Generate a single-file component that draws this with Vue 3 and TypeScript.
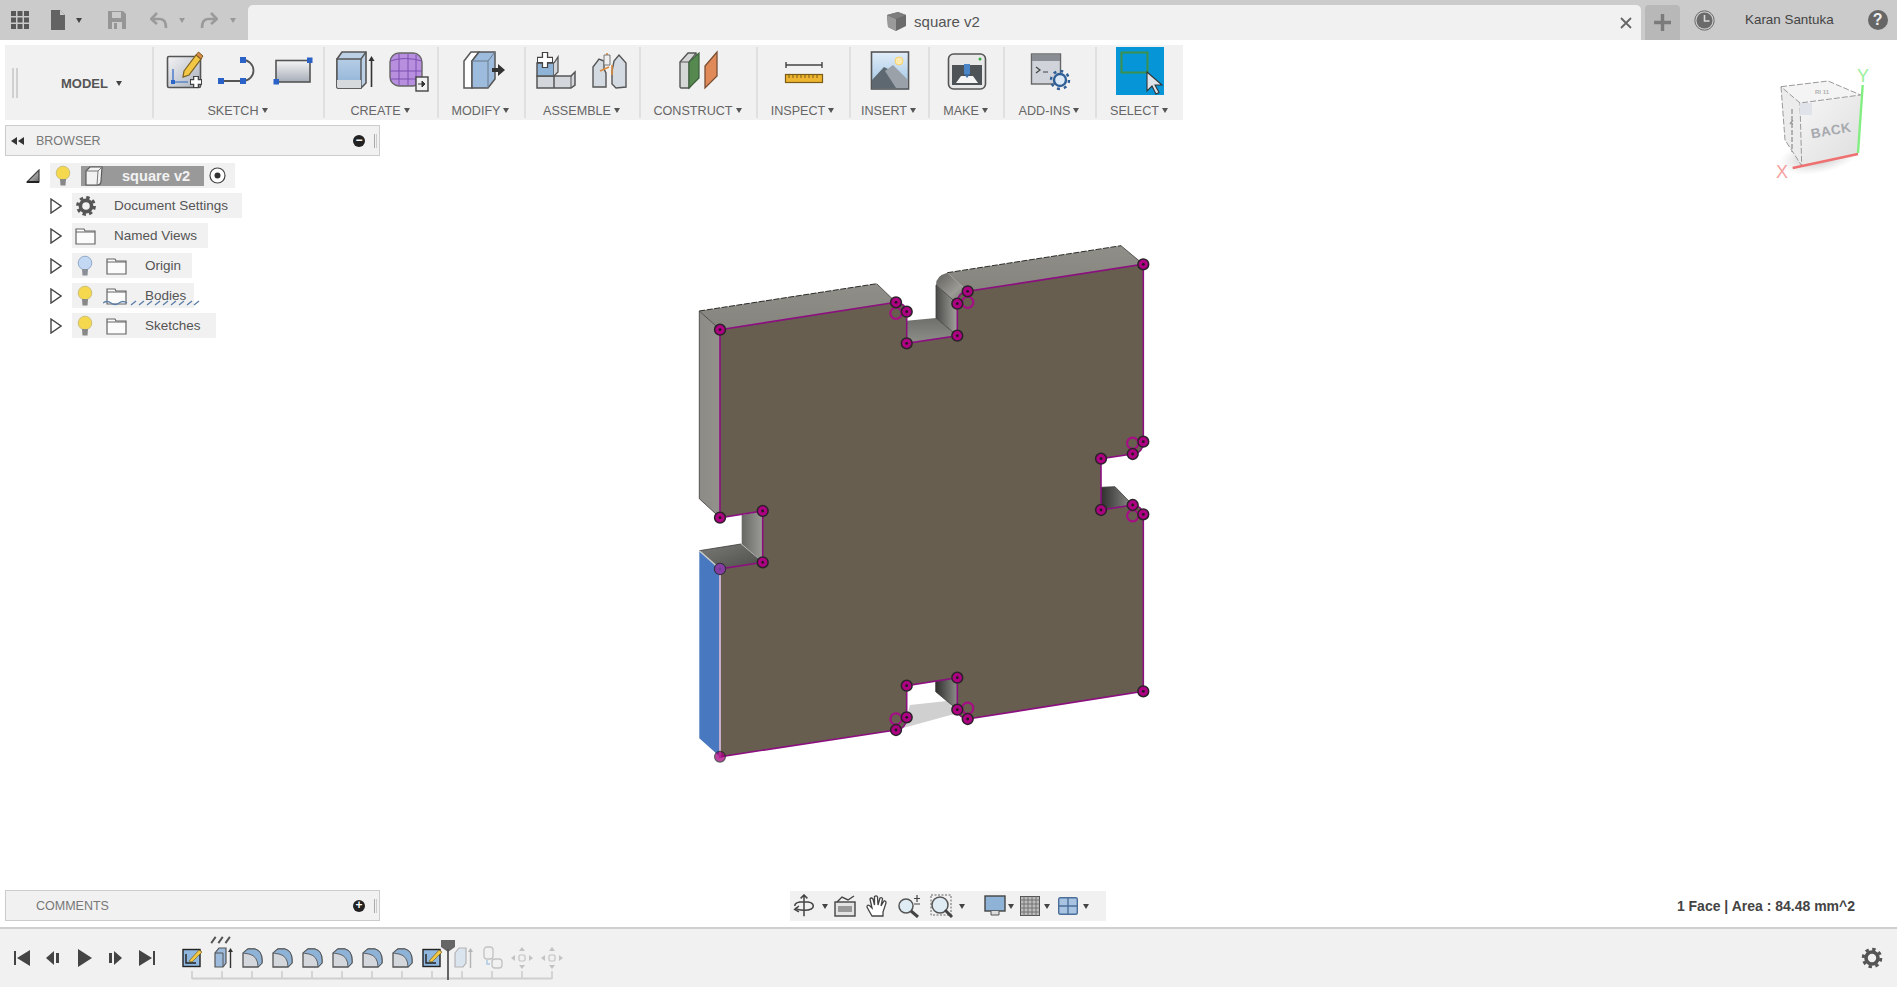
<script setup lang="ts">
const fillets: number[] = [1, 2, 3, 4, 5, 6];
const ticks: number[] = Array.from({ length: 13 }, (_, i) => 15 + i * 30);
const pts: [number, number][] = [
  [720, 329.7], [896, 302.3], [906.7, 311.7], [906.7, 343.3], [957.3, 335.7], [957.3, 303.7],
  [967.7, 291.3], [1143.3, 264.3], [1143.3, 441.7], [1132.7, 454], [1101, 458.7], [1101, 510],
  [1132.7, 505], [1143.3, 514.3], [1143.3, 691.3], [967.7, 719], [957.3, 709.7], [957.3, 677.7],
  [906.7, 685.7], [906.7, 717.3], [896, 730], [720, 569], [762.7, 562.3], [762.7, 511], [720, 517.7]
];
const rings: [number, number][] = [
  [896, 313.3], [967.7, 302.3], [1132.7, 443.3], [1132.7, 515.7], [896, 719], [967.7, 708.3]
];
</script>

<template>
  <div class="app">
    <svg class="scene" width="1897" height="987" viewBox="0 0 1897 987">
      <defs>
        <linearGradient id="gTop" x1="0" y1="0" x2="0" y2="1"><stop offset="0" stop-color="#8f8e88" /><stop offset="1" stop-color="#85847d" /></linearGradient>
        <linearGradient id="gLeft" x1="0" y1="0" x2="1" y2="0"><stop offset="0" stop-color="#8c8b85" /><stop offset="1" stop-color="#92918b" /></linearGradient>
        <linearGradient id="gWall" x1="0" y1="0" x2="1" y2="0"><stop offset="0" stop-color="#4a4a48" /><stop offset="1" stop-color="#a3a39e" /></linearGradient>
        <linearGradient id="gWall2" x1="0" y1="0" x2="1" y2="0"><stop offset="0" stop-color="#666663" /><stop offset="1" stop-color="#9c9c97" /></linearGradient>
        <linearGradient id="gFloor" x1="0" y1="0" x2="0" y2="1"><stop offset="0" stop-color="#6e6e6b" /><stop offset="1" stop-color="#8f8f8a" /></linearGradient>
        <linearGradient id="gFloor2" x1="0" y1="0" x2="1" y2="1"><stop offset="0" stop-color="#7a7a76" /><stop offset="1" stop-color="#4c4c4a" /></linearGradient>
        <linearGradient id="gDark" x1="0" y1="0" x2="1" y2="0"><stop offset="0" stop-color="#2f2f2e" /><stop offset="1" stop-color="#8c8c88" /></linearGradient>
        <linearGradient id="gRound" x1="0" y1="0" x2="1" y2="1"><stop offset="0" stop-color="#5f5f5c" /><stop offset=".6" stop-color="#9b9a94" /><stop offset="1" stop-color="#6d6d69" /></linearGradient>
        <linearGradient id="gCube" x1="0" y1="0" x2="1" y2="1"><stop offset="0" stop-color="#f6f6f6" /><stop offset="1" stop-color="#dedede" /></linearGradient>
        <radialGradient id="gShadow"><stop offset="0" stop-color="#9a9a9a" stop-opacity=".75" /><stop offset="1" stop-color="#bbb" stop-opacity="0" /></radialGradient>
      </defs>

      <polygon points="910,705 946.7,701 958,713 903,728" fill="#d0d0d0" />
      <polygon points="699.3,311 876.7,283.7 896,302.3 720,329.7" fill="url(#gTop)" />
      <polygon points="699.3,311 720,329.7 720,517.7 699.3,498.7" fill="url(#gLeft)" />
      <polygon points="906.7,343.3 957.3,335.7 936,318 906.7,320.7" fill="url(#gFloor)" />
      <polygon points="936,285 957.3,303.7 957.3,335.7 936,318" fill="url(#gWall)" />
      <path d="M936 285 Q935.5 276 947.3 272.7 L967.7 291.3 L957.3 303.7 Z" fill="url(#gRound)" />
      <polygon points="947.3,272.7 1121,245.7 1143.3,264.3 967.7,291.3" fill="url(#gTop)" />
      <polygon points="741.7,515 762.7,511 762.7,562.3 741.7,544" fill="url(#gWall2)" />
      <polygon points="699.3,550.7 741,544 762.7,562.3 720,569" fill="url(#gFloor2)" />
      <polygon points="1101,487.3 1115,486.7 1132.7,505 1101,510" fill="url(#gDark)" />
      <polygon points="935.7,681 957.3,677.7 957.3,709.7 935.7,691.7" fill="url(#gDark)" />
      <polygon points="699.3,550.7 720,569 720,756.7 699.3,738.3" fill="#4878c0" />

      <path d="M699.3 311 L876.7 283.7 M947.3 272.7 L1121 245.7" fill="none" stroke="#2c2c2a" stroke-width="1" stroke-dasharray="6 1.5" />
      <path d="M876.7 283.7 L896 302.3 M1121 245.7 L1143.3 264.3 M699.3 311 L720 329.7 M699.3 311 L699.3 498.7 L720 517.7 M699.3 550.7 L741 544 M1101 487.3 L1115 486.7 L1132.7 505 M935.7 681 L935.7 691.7 L957.3 709.7 M936 285 L936 318 L957.3 335.7 M936 285 L957.3 303.7" fill="none" stroke="#3a3a38" stroke-width=".8" />
      <path d="M699.3 550.7 L720 569" stroke="#ccc" stroke-width="1.5" />

      <path
        d="M720 329.7 L896 302.3 A10.7 10.7 0 0 1 906.7 313 L906.7 343.3 L957.3 335.7 L957.3 303.7 A10.7 11 0 0 1 967.7 291.3 L1143.3 264.3 L1143.3 441.7 A10.7 11 0 0 1 1132.7 454 L1101 458.7 L1101 510 L1132.7 505 A10.7 10.7 0 0 1 1143.3 514.3 L1143.3 691.3 L967.7 719 A10.7 10.7 0 0 1 957.3 709.7 L957.3 677.7 L906.7 685.7 L906.7 717.3 A10.7 12 0 0 1 896 730 L720 756.7 L720 569 L762.7 562.3 L762.7 511 L720 517.7 Z"
        fill="#675e4f"
        stroke="#8c0f80"
        stroke-width="1.6"
      />
      <path d="M720 569 L720 756.7" stroke="#c9aecb" stroke-width="2" />

      <circle v-for="(r, i) in rings" :key="'r' + i" :cx="r[0]" :cy="r[1]" r="5.6" fill="none" stroke="#a60e85" stroke-width="2.2" />
      <g v-for="(p, i) in pts" :key="'p' + i">
        <circle :cx="p[0]" :cy="p[1]" r="5.4" fill="#ad0082" stroke="#2b2228" stroke-width="1.5" />
        <circle :cx="p[0]" :cy="p[1]" r="1.4" fill="#22181f" />
      </g>
      <g opacity=".75">
        <circle cx="720" cy="569" r="5.4" fill="#7d4fb0" />
        <circle cx="720" cy="756.7" r="5.4" fill="#a8007f" stroke="#2b2228" stroke-width="1.2" />
      </g>

      <ellipse cx="1820" cy="156" rx="42" ry="17" fill="url(#gShadow)" transform="rotate(-12 1820 156)" />
      <polygon points="1781,86.7 1828,81 1860.7,95 1800,103" fill="#f4f4f4" />
      <polygon points="1781,86.7 1800,103 1801.7,165.7 1785,140" fill="#ececec" />
      <polygon points="1800,103 1860.7,95 1858,154 1801.7,165.7" fill="url(#gCube)" />
      <path d="M1781 86.7 L1828 81 L1860.7 95 L1800 103 Z M1781 86.7 L1785 140 L1801.7 165.7 L1800 103" fill="none" stroke="#9a9a9a" stroke-width="1" stroke-dasharray="6 2" />
      <rect x="1800" y="103" width="12" height="12" fill="#e0e4ea" />
      <text class="cube-back" x="1831" y="135" text-anchor="middle" transform="rotate(-10 1831 130)">BACK</text>
      <text class="cube-top" x="1822" y="94" text-anchor="middle">RI 11</text>
      <path d="M1792 109 V152 M1793 120 l-3 4 h3" stroke="#999" fill="none" stroke-width="1.4" stroke-dasharray="5 2" />
      <line x1="1792.7" y1="168" x2="1858" y2="154" stroke="#ee7070" stroke-width="2.4" />
      <line x1="1858" y1="153" x2="1862.7" y2="85" stroke="#82ee82" stroke-width="2.4" />
      <text class="axis-y" x="1863" y="82" text-anchor="middle">Y</text>
      <text class="axis-x" x="1782" y="178" text-anchor="middle">X</text>
    </svg>

    <header class="topbar">
      <svg class="t-grid" width="18" height="18" viewBox="0 0 18 18">
        <g fill="#595959">
          <rect x="0" y="0" width="5" height="5" /><rect x="6.5" y="0" width="5" height="5" /><rect x="13" y="0" width="5" height="5" />
          <rect x="0" y="6.5" width="5" height="5" /><rect x="6.5" y="6.5" width="5" height="5" /><rect x="13" y="6.5" width="5" height="5" />
          <rect x="0" y="13" width="5" height="5" /><rect x="6.5" y="13" width="5" height="5" /><rect x="13" y="13" width="5" height="5" />
        </g>
      </svg>
      <svg class="t-file" width="14" height="20" viewBox="0 0 14 20"><path d="M0 0 H9 L14 5 V20 H0 Z" fill="#636363" /><path d="M9 0 V5 H14" fill="#cbcbcb" /></svg>
      <span class="caret dark t-c1"></span>
      <svg class="t-save" width="18" height="18" viewBox="0 0 18 18"><path d="M0 0 H15 L18 3 V18 H0 Z" fill="#969696" /><rect x="4" y="1" width="9" height="6" fill="#cbcbcb" /><rect x="4" y="11" width="10" height="7" fill="#cbcbcb" /><rect x="6" y="12" width="3" height="6" fill="#969696" /></svg>
      <svg class="t-undo" width="18" height="18" viewBox="0 0 18 18"><path d="M7 2 L1 8 L7 13 M2 8 H10 Q16 8 16 17" fill="none" stroke="#9a9a9a" stroke-width="2.6" /></svg>
      <span class="caret faint t-c2"></span>
      <svg class="t-redo" width="18" height="18" viewBox="0 0 18 18"><path d="M11 2 L17 8 L11 13 M16 8 H8 Q2 8 2 17" fill="none" stroke="#9a9a9a" stroke-width="2.6" /></svg>
      <span class="caret faint t-c3"></span>

      <div class="doc-tab">
        <div class="doc-title">
          <svg width="21" height="21" viewBox="0 0 21 21"><path d="M1 4 L12 1 L20 4 V15 L10 20 L2 16 Z" fill="#6b6b6b" /><path d="M1 4 L10 8 V20 L2 16 Z" fill="#9a9a9a" /><path d="M1 4 L12 1 L20 4 L10 8 Z" fill="#7d7d7d" /></svg>
          <span>square v2</span>
        </div>
        <svg class="doc-close" width="12" height="12" viewBox="0 0 12 12"><path d="M1 1 L11 11 M11 1 L1 11" stroke="#666" stroke-width="1.8" /></svg>
      </div>
      <div class="new-tab"><svg width="17" height="17" viewBox="0 0 17 17"><path d="M8.5 0 V17 M0 8.5 H17" stroke="#7b7b7b" stroke-width="3.4" /></svg></div>
      <svg class="t-clock" width="21" height="21" viewBox="0 0 21 21"><circle cx="10.5" cy="10.5" r="8" fill="#6a6a6a" /><circle cx="10.5" cy="10.5" r="9.7" fill="none" stroke="#6a6a6a" stroke-width="1" /><path d="M10.5 5 V11 H15.5" fill="none" stroke="#d8d8d8" stroke-width="1.6" /></svg>
      <span class="user">Karan Santuka</span>
      <div class="help">?</div>
    </header>

    <main class="main">
      <div class="toolbar">
        <div class="tb-model">
          <span class="grip"></span>
          <span class="model-label">MODEL</span>
          <span class="caret dark"></span>
        </div>

        <div class="group g-sketch">
          <div class="icons">
            <svg class="ic" viewBox="0 0 54 48">
              <defs><linearGradient id="iBox" x1="0" y1="0" x2="1" y2="1"><stop offset="0" stop-color="#f3f3f4" /><stop offset="1" stop-color="#a9b0bc" /></linearGradient></defs>
              <rect x="9.5" y="9.5" width="33" height="31" rx="1.5" fill="url(#iBox)" stroke="#555" stroke-width="1.6" />
              <path d="M15 22 V35 H30" fill="none" stroke="#2c66c6" stroke-width="1.2" /><rect x="13" y="33" width="4" height="4" fill="#2c66c6" />
              <path d="M26 24 L38 8 L43 12 L31 28 L25 30 Z" fill="#f2c744" stroke="#7a5f1e" stroke-width="1.2" /><path d="M38 8 L43 12 L45 9 L40.5 5 Z" fill="#d98a4d" stroke="#7a5f1e" />
              <path d="M38 29 V41 M32 35 H44" stroke="#444" stroke-width="6" /><path d="M38 30 V40 M33 35 H43" stroke="#fff" stroke-width="3.4" />
            </svg>
            <svg class="ic" viewBox="0 0 54 48">
              <path d="M9 34 H31 M31 13 A10.5 10.5 0 0 1 31 34" fill="none" stroke="#555" stroke-width="1.8" />
              <g fill="#2a62c8"><rect x="6" y="31" width="6" height="6" /><rect x="28" y="31" width="6" height="6" /><rect x="28" y="10" width="6" height="6" /></g>
            </svg>
            <svg class="ic" viewBox="0 0 54 48">
              <defs><linearGradient id="iRect" x1="0" y1="0" x2="0" y2="1"><stop offset="0" stop-color="#f5f5f5" /><stop offset="1" stop-color="#a6adb8" /></linearGradient></defs>
              <rect x="10" y="13.5" width="34" height="21.5" fill="url(#iRect)" stroke="#555" stroke-width="1.6" />
              <g fill="#2a62c8"><rect x="41" y="10.5" width="5.5" height="5.5" /><rect x="7.5" y="32" width="5.5" height="5.5" /></g>
            </svg>
          </div>
          <span class="lbl">SKETCH<i class="caret"></i></span>
        </div>

        <div class="group g-create">
          <div class="icons">
            <svg class="ic" viewBox="0 0 54 48">
              <defs><linearGradient id="iBlue" x1="0" y1="0" x2="0" y2="1"><stop offset="0" stop-color="#b5cde6" /><stop offset="1" stop-color="#8fb2d7" /></linearGradient></defs>
              <path d="M10 12 L15 5 H39 V36 L34 41 H11 Q10 41 10 40 Z" fill="#bcd0e6" stroke="#555" stroke-width="1.6" />
              <path d="M10 12 H34 V41 H11 Q10 41 10 40 Z" fill="url(#iBlue)" stroke="#555" stroke-width="1.4" />
              <path d="M10 33 H34 V41 H11 L10 40 Z" fill="#d7dadd" />
              <path d="M34 12 L39 5" stroke="#555" stroke-width="1.3" />
              <path d="M44.5 40 V12" stroke="#333" stroke-width="1.6" /><path d="M41.5 14 L44.5 9 L47.5 14 Z" fill="#333" />
            </svg>
            <svg class="ic" viewBox="0 0 54 48">
              <rect x="9" y="6" width="32" height="33" rx="9" fill="#b78fde" stroke="#666" stroke-width="1.4" />
              <path d="M9 14 Q24 9 41 14 M9 24 H41 M9 32 H41 M18 7 V38 M27 7 V38 M35 8 V38" fill="none" stroke="#7d4fb0" stroke-width="1" />
              <rect x="35" y="30" width="12" height="14" fill="#f1f1f1" stroke="#444" stroke-width="1.4" /><path d="M37 37 H42 M41 34 L44 37 L41 40 Z" stroke="#333" fill="#333" />
            </svg>
          </div>
          <span class="lbl">CREATE<i class="caret"></i></span>
        </div>

        <div class="group g-modify">
          <div class="icons">
            <svg class="ic" viewBox="0 0 54 48">
              <path d="M9 41 V14 L16 5 H24 L17 14 V41 Z" fill="#fff" stroke="#555" stroke-width="1.5" />
              <path d="M17 41 V14 L24 5 H40 V32 L33 41 Z" fill="#9dbbdc" stroke="#555" stroke-width="1.5" />
              <path d="M17 14 H33 V41 M33 14 L40 5" fill="none" stroke="#6a7a8c" stroke-width="1" />
              <path d="M37 21 H43 V17 L50 23 L43 29 V25 H37 Z" fill="#333" />
            </svg>
          </div>
          <span class="lbl">MODIFY<i class="caret"></i></span>
        </div>

        <div class="group g-assemble">
          <div class="icons">
            <svg class="ic" viewBox="0 0 54 48">
              <path d="M8 29 H25 V41 H8 Z M25 29 H42 L46 25 V38 L42 41 H25 Z" fill="#d3d6da" stroke="#555" stroke-width="1.5" />
              <path d="M42 29 V41" stroke="#555" />
              <path d="M8 29 V16 H25 V29 Z" fill="#8fb2d7" stroke="#555" stroke-width="1.5" />
              <path d="M25 16 L29 10 V25 L25 29" fill="#d3d6da" stroke="#555" stroke-width="1.3" />
              <path d="M16 5 V21 M8 13 H24" stroke="#444" stroke-width="6.4" /><path d="M16 6 V20 M9 13 H23" stroke="#fff" stroke-width="3.8" />
            </svg>
            <svg class="ic" viewBox="0 0 54 48">
              <path d="M10 40 V20 L16 12 L21 14 V22 L23 26 V40 Z" fill="#d4dae2" stroke="#555" stroke-width="1.4" />
              <path d="M29 24 L31 14 L36 8 L43 16 V40 L33 41 L29 37 Z" fill="#d4dae2" stroke="#555" stroke-width="1.4" />
              <path d="M17 24 L26 20" stroke="#d98a3a" stroke-width="1.6" /><path d="M24 6 V16 M29 18 V28" stroke="#d98a3a" stroke-width="1.6" />
              <path d="M21 8 h6 v10 h-6 Z" fill="#eee" stroke="#777" />
            </svg>
          </div>
          <span class="lbl">ASSEMBLE<i class="caret"></i></span>
        </div>

        <div class="group g-construct">
          <div class="icons">
            <svg class="ic" viewBox="0 0 54 48">
              <path d="M8 40 V15 L16 6 H24 V31 L17 41 H9 Z" fill="#d5d6d6" stroke="#555" stroke-width="1.4" />
              <path d="M17 41 V15 L8 15 M17 15 L24 6" fill="none" stroke="#555" stroke-width="1.2" />
              <path d="M17 41 V15 L27 6 V31 Z" fill="#55894f" stroke="#3d5f3b" stroke-width="1.2" />
              <path d="M33 41 V19 L45 5 V29 Z" fill="#e08a5a" stroke="#7a4e33" stroke-width="1.3" />
            </svg>
          </div>
          <span class="lbl">CONSTRUCT<i class="caret"></i></span>
        </div>

        <div class="group g-inspect">
          <div class="icons">
            <svg class="ic" viewBox="0 0 54 48">
              <path d="M9 18 H45 M9 15 V21 M45 15 V21" fill="none" stroke="#444" stroke-width="1.4" />
              <rect x="8.5" y="27.5" width="37" height="8" fill="#eeb530" stroke="#7a5c16" stroke-width="1.2" />
              <path d="M12 28 v3 M16 28 v3 M20 28 v3 M24 28 v3 M28 28 v3 M32 28 v3 M36 28 v3 M40 28 v3" stroke="#7a5c16" />
            </svg>
          </div>
          <span class="lbl">INSPECT<i class="caret"></i></span>
        </div>

        <div class="group g-insert">
          <div class="icons">
            <svg class="ic" viewBox="0 0 54 48">
              <defs><linearGradient id="iSky" x1="0" y1="0" x2="0" y2="1"><stop offset="0" stop-color="#e1edf8" /><stop offset="1" stop-color="#9cc2e4" /></linearGradient></defs>
              <rect x="8.5" y="5" width="37" height="37" fill="url(#iSky)" stroke="#555" stroke-width="1.6" />
              <circle cx="36" cy="14" r="4" fill="#fdeab0" stroke="#f5d26b" />
              <path d="M9 33 L21 20 L27 23 L45 38 V41 H9 Z" fill="#5d6870" />
              <path d="M22 24 L30 18 L45 33 V41 H33 Z" fill="#9aa1a8" />
            </svg>
          </div>
          <span class="lbl">INSERT<i class="caret"></i></span>
        </div>

        <div class="group g-make">
          <div class="icons">
            <svg class="ic" viewBox="0 0 54 48">
              <rect x="8.5" y="7" width="37" height="35" rx="5" fill="#e8e8e8" stroke="#555" stroke-width="1.6" />
              <rect x="12" y="18" width="30" height="20" fill="#4e5358" />
              <path d="M16 36 L21 29 H33 L38 36 Z" fill="#f5f5f5" />
              <rect x="24" y="17" width="6" height="10" fill="#4a86c8" /><path d="M24 27 L27 31 L30 27 Z" fill="#3d6fa8" />
              <circle cx="40" cy="12" r="1.5" fill="#33aa44" />
            </svg>
          </div>
          <span class="lbl">MAKE<i class="caret"></i></span>
        </div>

        <div class="group g-addins">
          <div class="icons">
            <svg class="ic" viewBox="0 0 54 48">
              <rect x="8.5" y="7" width="29" height="30" fill="#d0d4da" stroke="#666" stroke-width="1.4" />
              <rect x="9" y="8" width="28" height="6" fill="#8a8e94" />
              <path d="M13 20 L17 23 L13 26 M20 25 H25" fill="none" stroke="#444" stroke-width="1.2" />
              <circle cx="37" cy="33" r="6" fill="#dce8f4" stroke="#2f5f96" stroke-width="2.4" />
              <circle cx="37" cy="33" r="9" fill="none" stroke="#2f5f96" stroke-width="2.4" stroke-dasharray="3 4.07" />
            </svg>
          </div>
          <span class="lbl">ADD-INS<i class="caret"></i></span>
        </div>

        <div class="group g-select">
          <div class="icons">
            <div class="select-btn">
              <svg width="48" height="48" viewBox="0 0 48 48">
                <rect x="5.5" y="5.5" width="26" height="20" fill="none" stroke="#3c8f4c" stroke-width="2" />
                <path d="M31 25 L31 44 L36 39 L40 47 L43 45.5 L39 38 L46 38 Z" fill="#dfe3ea" stroke="#333" stroke-width="1.1" />
              </svg>
            </div>
          </div>
          <span class="lbl">SELECT<i class="caret"></i></span>
        </div>
      </div>

      <div class="panel browser">
        <svg class="rew" width="13" height="8" viewBox="0 0 13 8"><path d="M6 0 V8 L0 4 Z M13 0 V8 L7 4 Z" fill="#333" /></svg>
        <span class="panel-title">BROWSER</span>
        <span class="disc">−</span>
        <span class="panel-grip"></span>
      </div>

      <div class="tree">
        <div class="row root">
          <svg class="root-tri" width="14" height="14" viewBox="0 0 14 14"><defs><linearGradient id="iTri" x1="0" y1="0" x2="1" y2="1"><stop offset="0" stop-color="#eee" /><stop offset="1" stop-color="#666" /></linearGradient></defs><path d="M1 13 L13 1 V13 Z" fill="url(#iTri)" stroke="#444" stroke-width="1.2" /><path d="M1 13 H13" stroke="#222" stroke-width="2" /></svg>
          <div class="pill root-pill">
            <svg class="bulb-slot" width="26" height="22" viewBox="0 0 26 22"><circle cx="13" cy="8" r="6.8" fill="#f6d84e" stroke="#c9c07a" /><path d="M10 14 L10.5 20.5 H15.5 L16 14 Z" fill="#888" /></svg>
            <div class="active-doc">
              <svg width="24" height="20" viewBox="0 0 24 20"><path d="M5 5 L9 1 H21 L20 15 Q20 19 16 19 H5 Z" fill="#f2f2f2" stroke="#555" stroke-width="1.1" /><path d="M5 5 H17 L16 19" fill="none" stroke="#777" stroke-width="1" /><path d="M17 5 L21 1" stroke="#777" /></svg>
              <span>square v2</span>
            </div>
            <svg class="target" width="17" height="17" viewBox="0 0 17 17"><circle cx="8.5" cy="8.5" r="7.5" fill="#fff" stroke="#444" stroke-width="1.2" /><circle cx="8.5" cy="8.5" r="3" fill="#333" /></svg>
          </div>
        </div>

        <div class="row">
          <svg class="tri" width="12" height="16" viewBox="0 0 12 16"><path d="M1 1 L11 8 L1 15 Z" fill="#fff" stroke="#444" stroke-width="1.4" /></svg>
          <div class="pill">
            <svg class="gear-slot" width="28" height="22" viewBox="0 0 28 22"><circle cx="14" cy="11" r="5.6" fill="none" stroke="#555" stroke-width="3.6" /><circle cx="14" cy="11" r="8.4" fill="none" stroke="#555" stroke-width="3" stroke-dasharray="3.4 3.2" /></svg>
            <span class="t t-doc">Document Settings</span>
          </div>
        </div>

        <div class="row">
          <svg class="tri" width="12" height="16" viewBox="0 0 12 16"><path d="M1 1 L11 8 L1 15 Z" fill="#fff" stroke="#444" stroke-width="1.4" /></svg>
          <div class="pill">
            <svg class="folder-first" width="26" height="18" viewBox="0 0 26 18"><path d="M4 2 H12 L13 4 H23 V17 H4 Z" fill="#fbfbfb" stroke="#666" stroke-width="1.2" /><path d="M4 5 H23" stroke="#666" /></svg>
            <span class="t t-named">Named Views</span>
          </div>
        </div>

        <div class="row">
          <svg class="tri" width="12" height="16" viewBox="0 0 12 16"><path d="M1 1 L11 8 L1 15 Z" fill="#fff" stroke="#444" stroke-width="1.4" /></svg>
          <div class="pill">
            <svg class="bulb-slot" width="26" height="22" viewBox="0 0 26 22"><circle cx="13" cy="8" r="6.8" fill="#c3d8f3" stroke="#8fa9c9" /><path d="M10 14 L10.5 20.5 H15.5 L16 14 Z" fill="#8a8f96" /></svg>
            <svg class="folder" width="37" height="18" viewBox="0 0 37 18"><path d="M9 2 H17 L18 4 H28 V17 H9 Z" fill="#fbfbfb" stroke="#666" stroke-width="1.2" /><path d="M9 5 H28" stroke="#666" /></svg>
            <span class="t t-sub t-origin">Origin</span>
          </div>
        </div>

        <div class="row">
          <svg class="tri" width="12" height="16" viewBox="0 0 12 16"><path d="M1 1 L11 8 L1 15 Z" fill="#fff" stroke="#444" stroke-width="1.4" /></svg>
          <div class="pill bodies">
            <svg class="bulb-slot" width="26" height="22" viewBox="0 0 26 22"><circle cx="13" cy="8" r="6.8" fill="#f6d84e" stroke="#c9c07a" /><path d="M10 14 L10.5 20.5 H15.5 L16 14 Z" fill="#888" /></svg>
            <svg class="folder" width="37" height="18" viewBox="0 0 37 18"><path d="M9 2 H17 L18 4 H28 V17 H9 Z" fill="#fbfbfb" stroke="#666" stroke-width="1.2" /><path d="M9 5 H28" stroke="#666" /></svg>
            <span class="t t-sub t-bodies">Bodies</span>
            <svg class="squiggle" width="97" height="6" viewBox="0 0 97 6"><path d="M0 3 Q4 0 8 3 T16 3 T24 3 M28 5 L33 1 M36 5 L41 1 M44 5 L49 1 M52 5 L57 1 M60 5 L65 1 M68 5 L73 1 M76 5 L81 1 M84 5 L89 1 M91 5 L96 1" fill="none" stroke="#5b7fa8" stroke-width="1.4" /></svg>
          </div>
        </div>

        <div class="row">
          <svg class="tri" width="12" height="16" viewBox="0 0 12 16"><path d="M1 1 L11 8 L1 15 Z" fill="#fff" stroke="#444" stroke-width="1.4" /></svg>
          <div class="pill">
            <svg class="bulb-slot" width="26" height="22" viewBox="0 0 26 22"><circle cx="13" cy="8" r="6.8" fill="#f6d84e" stroke="#c9c07a" /><path d="M10 14 L10.5 20.5 H15.5 L16 14 Z" fill="#888" /></svg>
            <svg class="folder" width="37" height="18" viewBox="0 0 37 18"><path d="M9 2 H17 L18 4 H28 V17 H9 Z" fill="#fbfbfb" stroke="#666" stroke-width="1.2" /><path d="M9 5 H28" stroke="#666" /></svg>
            <span class="t t-sub t-sketches">Sketches</span>
          </div>
        </div>
      </div>

      <div class="bottom-row">
        <div class="panel comments">
          <span class="panel-title">COMMENTS</span>
          <span class="disc">+</span>
          <span class="panel-grip"></span>
        </div>

        <div class="nav">
          <svg class="n-orbit" width="22" height="24" viewBox="0 0 26 26"><path d="M13 1 V25 M9 4 L13 0 L17 4 M2 13 Q2 8 13 8 Q24 8 24 13 Q24 18 13 18 Q5 18 3 15 M7 13 L2 17 L7 20" fill="none" stroke="#444" stroke-width="1.8" /></svg>
          <span class="caret dark n-c1"></span>
          <svg class="n-box" width="22" height="22" viewBox="0 0 22 22"><rect x="1" y="7" width="20" height="14" fill="#e4e4e4" stroke="#444" stroke-width="1.4" /><rect x="4" y="11" width="14" height="6" fill="#999" /><path d="M3 7 L8 2 L14 5 L20 1" fill="none" stroke="#444" stroke-width="1.4" /></svg>
          <svg class="n-hand" width="22" height="24" viewBox="0 0 22 24"><path d="M6 22 Q3 17 1 13 Q1 10 4 12 L6 14 L4 5 Q5 3 7 5 L8.5 11 L8.5 2.5 Q10.5 1 11.5 3 L12 11 L14 4 Q16 3 16.5 5 L15 12 L18 7 Q20 6.5 20 9 L17 18 V22 Z" fill="#fff" stroke="#444" stroke-width="1.3" /></svg>
          <svg class="n-zoom" width="24" height="24" viewBox="0 0 24 24"><circle cx="9" cy="12" r="7" fill="#dfecf4" stroke="#555" stroke-width="1.5" /><path d="M14 17 L21 23" stroke="#444" stroke-width="3" /><path d="M20 1 V8 M17 4.5 H23 M17 10 H23" stroke="#444" stroke-width="1.2" /></svg>
          <svg class="n-zoomw" width="24" height="24" viewBox="0 0 24 24"><rect x="1" y="1" width="20" height="20" fill="none" stroke="#666" stroke-dasharray="2 1.5" /><circle cx="10" cy="11" r="8" fill="#dfecf4" stroke="#555" stroke-width="1.5" /><path d="M15 16 L22 23" stroke="#444" stroke-width="3" /></svg>
          <span class="caret dark n-c2"></span>
          <svg class="n-disp" width="22" height="22" viewBox="0 0 22 22"><rect x="1" y="1" width="20" height="15" fill="#8fb2d7" stroke="#444" stroke-width="1.4" /><path d="M7 16 V20 H15 V16" fill="#ddd" stroke="#555" /></svg>
          <span class="caret dark n-c3"></span>
          <svg class="n-grid" width="20" height="20" viewBox="0 0 20 20"><rect x="0.5" y="0.5" width="19" height="19" fill="#bbb" stroke="#555" /><path d="M4 0 V20 M8 0 V20 M12 0 V20 M16 0 V20 M0 4 H20 M0 8 H20 M0 12 H20 M0 16 H20" stroke="#666" stroke-width=".8" /></svg>
          <span class="caret dark n-c4"></span>
          <svg class="n-view" width="20" height="18" viewBox="0 0 20 18"><rect x="0.7" y="0.7" width="18.6" height="16.6" rx="1.5" fill="#a9c4e2" stroke="#4b6f99" stroke-width="1.4" /><path d="M10 0 V18 M0 9 H20" stroke="#4b6f99" stroke-width="1.4" /></svg>
          <span class="caret dark n-c5"></span>
        </div>

        <div class="status">1 Face | Area : 84.48 mm^2</div>
      </div>
    </main>

    <footer class="timeline-bar">
      <svg class="ctl" viewBox="0 0 31 30"><path d="M9 8 V22" stroke="#444" stroke-width="2" /><path d="M24 7 V23 L11 15 Z" fill="#444" /></svg>
      <svg class="ctl" viewBox="0 0 31 30"><path d="M17 8 V22 L9 15 Z" fill="#444" /><rect x="19" y="10" width="3" height="10" fill="#444" /></svg>
      <svg class="ctl" viewBox="0 0 31 30"><path d="M10 6 V24 L24 15 Z" fill="#444" /></svg>
      <svg class="ctl" viewBox="0 0 31 30"><rect x="10" y="10" width="3" height="10" fill="#444" /><path d="M15 8 V22 L23 15 Z" fill="#444" /></svg>
      <svg class="ctl" viewBox="0 0 31 30"><path d="M9 7 V23 L22 15 Z" fill="#444" /><path d="M24 8 V22" stroke="#444" stroke-width="2" /></svg>

      <div class="timeline">
        <svg class="ruler" width="390" height="40" viewBox="0 0 390 40">
          <line x1="15" y1="35.5" x2="375" y2="35.5" stroke="#cfcfcf" stroke-width="2" />
          <line v-for="t in ticks" :key="t" :x1="t" y1="28" :x2="t" y2="36" stroke="#cfcfcf" stroke-width="1.6" />
        </svg>
        <svg class="step" viewBox="0 0 30 30"><rect x="6" y="6.5" width="17" height="17" fill="#8fb6dc" stroke="#222" stroke-width="1.4" /><path d="M9 11 V20 H19" fill="none" stroke="#222" stroke-width="1.4" /><path d="M12 18 L22 7 L25 9 L15 19 Z" fill="#f2c744" stroke="#7a5f1e" stroke-width=".7" /></svg>
        <svg class="step" viewBox="0 0 30 30"><path d="M8 24 V10 L12 5 H19 V20 L16 24 Z" fill="#9dbbdc" stroke="#555" stroke-width="1.2" /><path d="M8 10 H16 V24" fill="none" stroke="#555" /><path d="M23.5 25 V8" stroke="#333" stroke-width="1.4" /><path d="M21 9 L23.5 5 L26 9 Z" fill="#333" /></svg>
        <svg v-for="n in fillets" :key="n" class="step" viewBox="0 0 30 30">
          <path d="M6 24 V10 L11 6 H18 Q25 8 25 17 V20 L21 24 Z" fill="#d4d8dc" stroke="#555" stroke-width="1.3" />
          <path d="M11 6 H18 Q25 8 25 17 V20 L21 24 Q21 13 12 11 L6 10 Z" fill="#8fb2d7" stroke="#555" stroke-width=".9" />
        </svg>
        <svg class="step" viewBox="0 0 30 30"><rect x="6" y="6.5" width="17" height="17" fill="#8fb6dc" stroke="#222" stroke-width="1.4" /><path d="M9 11 V20 H19" fill="none" stroke="#222" stroke-width="1.4" /><path d="M12 18 L22 7 L25 9 L15 19 Z" fill="#f2c744" stroke="#7a5f1e" stroke-width=".7" /></svg>
        <svg class="step dim" viewBox="0 0 30 30"><path d="M8 24 V10 L12 5 H19 V20 L16 24 Z" fill="#d5e2ef" stroke="#aaa" stroke-width="1.2" /><path d="M23.5 25 V8" stroke="#aaa" stroke-width="1.4" /><path d="M21 9 L23.5 5 L26 9 Z" fill="#aaa" /></svg>
        <svg class="step dim" viewBox="0 0 30 30"><rect x="7" y="4" width="9" height="12" rx="3" fill="none" stroke="#bbb" stroke-width="1.3" /><rect x="15" y="16" width="10" height="9" rx="3" fill="none" stroke="#bbb" stroke-width="1.3" /><path d="M10 17 V21 H13" fill="none" stroke="#9fc0de" stroke-width="1.4" /></svg>
        <svg class="step dim" viewBox="0 0 30 30"><g fill="#bbb"><path d="M15 4 L18 8 H12 Z M15 26 L18 22 H12 Z M4 15 L8 12 V18 Z M26 15 L22 12 V18 Z" /></g><rect x="12" y="12" width="6" height="6" rx="1.5" fill="none" stroke="#bbb" stroke-width="1.2" /></svg>
        <svg class="step dim" viewBox="0 0 30 30"><g fill="#bbb"><path d="M15 4 L18 8 H12 Z M15 26 L18 22 H12 Z M4 15 L8 12 V18 Z M26 15 L22 12 V18 Z" /></g><rect x="12" y="12" width="6" height="6" rx="1.5" fill="none" stroke="#bbb" stroke-width="1.2" /></svg>

        <svg class="marker" width="18" height="42" viewBox="0 0 18 42"><path d="M2 1 H16 V8 L9 13 L2 8 Z" fill="#666" /><path d="M9 10 V41" stroke="#555" stroke-width="1.8" /></svg>
        <svg class="batch" width="26" height="8" viewBox="0 0 28 9"><path d="M3 8 L8 1 M11 8 L16 1 M19 8 L24 1" stroke="#555" stroke-width="2.2" /></svg>
      </div>

      <svg class="tl-gear" width="24" height="24" viewBox="0 0 24 24"><circle cx="12" cy="12" r="6" fill="none" stroke="#555" stroke-width="3.6" /><circle cx="12" cy="12" r="8.8" fill="none" stroke="#555" stroke-width="3" stroke-dasharray="3.4 3.5" /></svg>
    </footer>
  </div>
</template>

<style scoped>
.app {
  position: relative;
  width: 1897px;
  height: 987px;
  overflow: hidden;
  display: flex;
  flex-direction: column;
  background: #fff;
  font-family: "Liberation Sans", Arial, sans-serif;
  color: #666;
}
.scene {
  position: absolute;
  left: 0;
  top: 0;
}
.cube-back { font: bold 13.5px "Liberation Sans", sans-serif; fill: #a7a9af; letter-spacing: .4px; }
.cube-top { font: bold 6px "Liberation Sans", sans-serif; fill: #b0b0b0; }
.axis-y { font: 18px "Liberation Sans", sans-serif; fill: #9bf09b; }
.axis-x { font: 18px "Liberation Sans", sans-serif; fill: #f5a0a0; }

.caret {
  display: inline-block;
  width: 0;
  height: 0;
  border-left: 3.5px solid transparent;
  border-right: 3.5px solid transparent;
  border-top: 5px solid #555;
  flex: none;
}
.caret.dark { border-top-color: #444; }
.caret.faint { border-top-color: #999; }

/* top bar */
.topbar {
  position: relative;
  flex: none;
  height: 40px;
  background: #cbcbcb;
  display: flex;
  align-items: center;
}
.t-grid { margin-left: 11px; flex: none; }
.t-file { margin-left: 22px; flex: none; }
.t-c1 { margin-left: 11px; }
.t-save { margin-left: 26px; flex: none; }
.t-undo { margin-left: 24px; flex: none; }
.t-c2 { margin-left: 11px; }
.t-redo { margin-left: 15px; flex: none; }
.t-c3 { margin-left: 12px; }
.doc-tab {
  align-self: flex-end;
  margin-left: 12px;
  width: 1393px;
  height: 35px;
  background: #f1f1f1;
  border-radius: 5px 5px 0 0;
  display: flex;
  align-items: center;
  flex: none;
}
.doc-title {
  flex: 1;
  display: flex;
  justify-content: center;
  align-items: center;
  gap: 7px;
  font-size: 15px;
  color: #555;
  padding-left: 7px;
  margin-top: -2px;
}
.doc-close { flex: none; margin-right: 9px; margin-left: 9px; }
.new-tab {
  align-self: flex-end;
  margin-left: 4px;
  width: 35px;
  height: 35px;
  background: #b8b8b8;
  border-radius: 4px 4px 0 0;
  display: flex;
  justify-content: center;
  align-items: center;
  flex: none;
}
.t-clock { margin-left: 14px; flex: none; }
.user { margin-left: 30px; font-size: 13.4px; color: #444; white-space: nowrap; margin-top: -1px; }
.help {
  margin-left: 34px;
  width: 20px;
  height: 20px;
  border-radius: 50%;
  background: #666;
  color: #eee;
  font: bold 16px/20px "Liberation Sans", sans-serif;
  text-align: center;
  flex: none;
}

/* main */
.main {
  position: relative;
  flex: 1;
  display: flex;
  flex-direction: column;
  min-height: 0;
}
.toolbar {
  margin: 5px 0 0 5px;
  width: 1178px;
  height: 75px;
  background: #f1f1f1;
  display: flex;
  align-items: flex-start;
  padding-top: 2px;
  box-sizing: border-box;
  flex: none;
}
.tb-model {
  width: 147px;
  height: 72px;
  display: flex;
  align-items: center;
  box-sizing: border-box;
  flex: none;
}
.grip {
  margin-left: 7px;
  width: 6px;
  height: 30px;
  border-left: 2px solid #d0d0d0;
  border-right: 2px solid #d0d0d0;
  box-sizing: border-box;
}
.model-label {
  margin-left: 43px;
  font-size: 13px;
  font-weight: bold;
  color: #555;
}
.tb-model .caret { margin-left: 8px; }
.group {
  height: 71px;
  border-left: 2px solid #e0e0e0;
  box-sizing: border-box;
  display: flex;
  flex-direction: column;
  align-items: center;
  flex: none;
}
.g-sketch { width: 171px; }
.g-create { width: 114px; }
.g-modify { width: 87px; }
.g-assemble { width: 115px; }
.g-construct { width: 117px; }
.g-inspect { width: 93px; }
.g-insert { width: 79px; }
.g-make { width: 75px; }
.g-addins { width: 92px; }
.g-select { width: 88px; }
.icons {
  height: 48px;
  display: flex;
  flex: none;
}
.ic { width: 54px; height: 48px; flex: none; }
.select-btn {
  width: 48px;
  height: 48px;
  background: #0696d7;
}
.select-btn svg { display: block; }
.lbl {
  margin-top: 9px;
  margin-right: 2px;
  font-size: 12.6px;
  line-height: 15px;
  color: #666;
  white-space: nowrap;
}
.lbl .caret { margin-left: 3px; vertical-align: 2px; }

/* panels */
.panel {
  width: 375px;
  background: #f1f1f1;
  border: 1px solid #ccc;
  box-sizing: border-box;
  display: flex;
  align-items: center;
  flex: none;
}
.browser {
  margin: 5px 0 0 5px;
  height: 31px;
}
.rew { margin-left: 5px; flex: none; }
.panel-title {
  margin-left: 12px;
  font-size: 12.5px;
  color: #777;
}
.disc {
  margin-left: auto;
  width: 12px;
  height: 12px;
  border-radius: 50%;
  background: #222;
  color: #fff;
  font: bold 12px/11px "Liberation Sans", sans-serif;
  text-align: center;
  flex: none;
}
.panel-grip {
  margin: 0 2px 0 9px;
  width: 3px;
  height: 14px;
  border-left: 1px solid #aaa;
  border-right: 1px solid #ccc;
  box-sizing: border-box;
  flex: none;
}

/* tree */
.tree {
  margin-top: 7px;
  flex: 1;
  min-height: 0;
}
.row {
  display: flex;
  align-items: center;
  height: 25px;
  margin-bottom: 5px;
  padding-left: 50px;
}
.row.root { padding-left: 26px; }
.root-tri { flex: none; margin-right: 10px; }
.tri { flex: none; margin-right: 10px; }
.pill {
  position: relative;
  height: 25px;
  background: #f1f1f1;
  display: flex;
  align-items: center;
  flex: none;
}
.root-pill { width: 185px; }
.bulb-slot, .gear-slot, .folder-first, .folder { flex: none; }
.active-doc {
  margin-left: 5px;
  width: 123px;
  height: 20px;
  background: #999;
  display: flex;
  align-items: center;
  color: #f2f2f2;
  font-size: 14.6px;
  font-weight: bold;
  flex: none;
}
.active-doc span { margin-left: 17px; }
.target { margin-left: 5px; flex: none; }
.t { font-size: 13.5px; color: #555; white-space: nowrap; }
.t-doc { margin-left: 14px; margin-right: 14px; }
.t-named { margin-left: 16px; margin-right: 11px; }
.t-sub { margin-left: 10px; }
.t-origin { margin-right: 11px; }
.t-bodies { margin-right: 8px; }
.t-sketches { margin-right: 15px; }
.squiggle {
  position: absolute;
  left: 31px;
  bottom: 2px;
}

/* bottom row in main */
.bottom-row {
  display: flex;
  align-items: flex-end;
  margin-bottom: 6px;
  flex: none;
}
.comments {
  margin-left: 5px;
  height: 31px;
}
.comments .panel-title { margin-left: 30px; }
.nav {
  margin-left: 410px;
  width: 316px;
  height: 30px;
  background: #f1f1f1;
  display: flex;
  align-items: center;
  flex: none;
}
.nav svg { flex: none; }
.n-orbit { margin-left: 3px; }
.n-c1 { margin-left: 7px; }
.n-box { margin-left: 6px; }
.n-hand { margin-left: 10px; }
.n-zoom { margin-left: 9px; }
.n-zoomw { margin-left: 9px; }
.n-c2 { margin-left: 5px; }
.n-disp { margin-left: 19px; }
.n-c3 { margin-left: 2px; }
.n-grid { margin-left: 6px; }
.n-c4 { margin-left: 4px; }
.n-view { margin-left: 8px; }
.n-c5 { margin-left: 5px; }
.status {
  margin-left: auto;
  padding-right: 42px;
  height: 30px;
  line-height: 30px;
  font-size: 14px;
  font-weight: bold;
  color: #444;
  white-space: nowrap;
}

/* timeline */
.timeline-bar {
  flex: none;
  height: 60px;
  background: #f1f1f1;
  border-top: 2px solid #cfcfcf;
  box-sizing: border-box;
  display: flex;
  align-items: center;
  padding-left: 6px;
}
.ctl { width: 31px; height: 30px; flex: none; }
.timeline {
  position: relative;
  margin-left: 16px;
  display: flex;
  flex: none;
}
.step { position: relative; width: 30px; height: 30px; flex: none; }
.dim { opacity: .85; }
.ruler {
  position: absolute;
  left: 0;
  top: 0;
  overflow: visible;
}
.marker {
  position: absolute;
  left: 262px;
  top: -4px;
}
.batch {
  position: absolute;
  left: 31px;
  top: -7px;
}
.tl-gear { margin-left: auto; margin-right: 13px; flex: none; }
</style>

<style>
html, body { margin: 0; padding: 0; background: #fff; }
</style>
